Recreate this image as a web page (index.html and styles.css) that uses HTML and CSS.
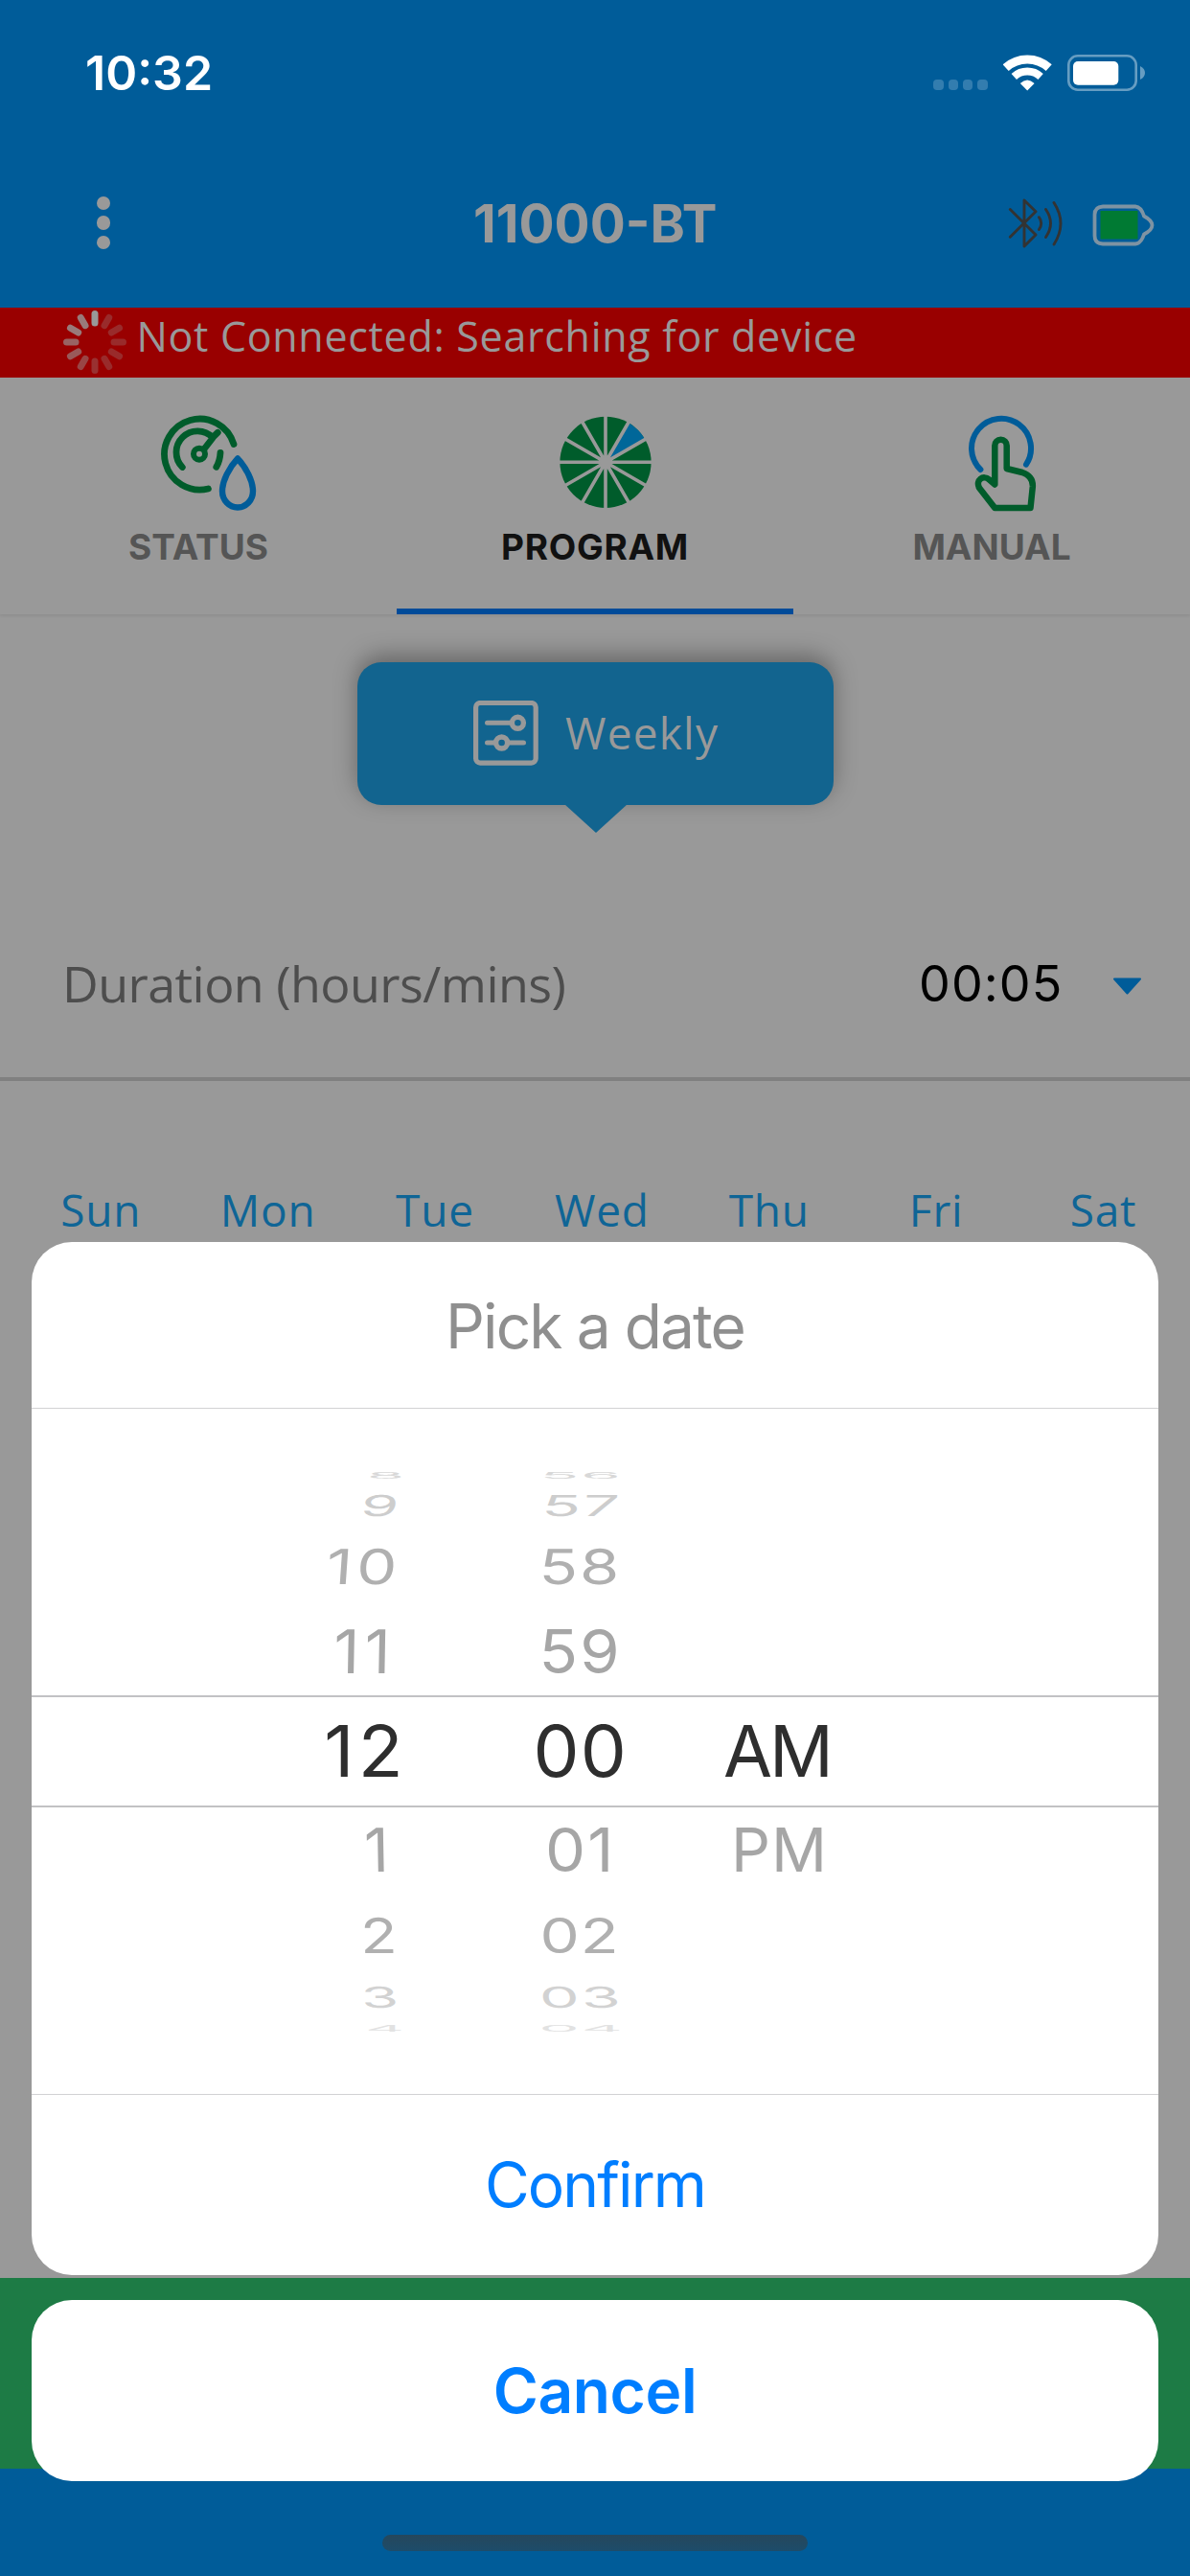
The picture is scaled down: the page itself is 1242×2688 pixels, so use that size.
FILE: index.html
```html
<!DOCTYPE html>
<html lang="en">
<head>
<meta charset="utf-8">
<title>11000-BT</title>
<link rel="stylesheet" href="styles.css">
</head>
<body>
<div class="screen">
  <div class="app">
    <header class="header">
      <div class="statusbar">
        <span class="clock">10:32</span>
        <span class="status-icons">
          <span class="cell-dots"><i></i><i></i><i></i><i></i></span>
          <svg class="wifi" width="51" height="38" viewBox="1046.5 56.5 51 38" fill="none" stroke="#fff">
            <path d="M1049.2 70.2A33.5 33.5 0 0 1 1094.2 70.2" stroke-width="9"/>
            <path d="M1057.8 79.5A20.6 20.6 0 0 1 1085.6 79.5" stroke-width="8"/>
            <path d="M1071.7 94L1064.3 86.6Q1071.7 79.5 1079.1 86.6Z" fill="#fff" stroke="none"/>
          </svg>
          <svg class="phone-battery" width="82" height="38" viewBox="1114 57 82 38">
            <rect x="1115.3" y="58.3" width="70.4" height="35.4" rx="9.5" fill="none" stroke="#669dc2" stroke-width="2.6"/>
            <rect x="1120" y="64" width="47.3" height="24.8" rx="5" fill="#fff"/>
            <path d="M1190 69Q1195 71.5 1195 76T1190 83Z" fill="#669dc2"/>
          </svg>
        </span>
      </div>
      <div class="navbar">
        <span class="menu"><i></i><i></i><i></i></span>
        <h1 class="title">11000-BT</h1>
        <span class="nav-icons">
          <svg width="58" height="54" viewBox="1052 206 58 54" fill="none" stroke="#333" stroke-width="2.9" stroke-linecap="round" stroke-linejoin="round">
            <path d="M1054.3 218.5L1081 245L1069 257V209L1081 220.7L1054.3 247.3"/>
            <path d="M1084.4 226.7Q1089 233 1084.4 239.5M1091.5 218.5Q1101.5 233 1091.5 247.5M1100 211.5Q1114 233 1100 255"/>
          </svg>
          <svg width="65" height="44" viewBox="1140 213 65 44">
            <path d="M1151 215.5H1185Q1191 216 1194 225.500Q1202.500 230 1202.500 235T1194 244.500Q1191 254 1185 254.500H1151Q1142.500 254 1142.500 246V224Q1142.500 216 1151 215.500Z" fill="none" stroke="#7e93a3" stroke-width="3.800"/>
            <rect x="1148.500" y="220" width="39" height="29.500" fill="#007a33"/>
          </svg>
        </span>
      </div>
    </header>

    <div class="alert">
      <svg class="spinner" width="68" height="68" viewBox="-34 -34 68 68" stroke="#999" stroke-width="7" stroke-linecap="round">
        <path d="M0-29.500V-20"/>
        <path d="M0-29.500V-20" transform="rotate(330)" opacity=".8"/>
        <path d="M0-29.500V-20" transform="rotate(300)" opacity=".8"/>
        <path d="M0-29.500V-20" transform="rotate(270)" opacity=".65"/>
        <path d="M0-29.500V-20" transform="rotate(240)" opacity=".58"/>
        <path d="M0-29.500V-20" transform="rotate(210)" opacity=".45"/>
        <path d="M0-29.500V-20" transform="rotate(180)" opacity=".32"/>
        <path d="M0-29.500V-20" transform="rotate(150)" opacity=".28"/>
        <path d="M0-29.500V-20" transform="rotate(120)" opacity=".28"/>
        <path d="M0-29.500V-20" transform="rotate(90)" opacity=".28"/>
        <path d="M0-29.500V-20" transform="rotate(60)" opacity=".28"/>
        <path d="M0-29.500V-20" transform="rotate(30)" opacity=".28"/>
      </svg>
      <span class="alert-text">Not Connected: Searching for device</span>
    </div>

    <nav class="tabs">
      <div class="tab">
        <svg class="tab-icon status-icon" width="100" height="101" viewBox="168 433 100 101" fill="none" stroke="#005c2b" stroke-width="6.800" stroke-linecap="round" stroke-linejoin="round">
          <path d="M244 463.500A37 37 0 1 0 217.400 510"/>
          <path d="M190.300 487.500A21.500 21.500 0 0 1 222 456.500L227.300 451.300M222 457L213.500 468"/>
          <path d="M230 472.500Q229.500 481 225.800 487.300"/>
          <circle cx="208" cy="473.700" r="6" stroke-width="6"/>
          <path d="M248 478.500C239 488 232 502 232 512.500A16 17 0 0 0 264 512.500C264 502 257 488 248 478.500Z" stroke="#005c99" stroke-width="6.400"/>
        </svg>
        <span class="tab-label">STATUS</span>
      </div>
      <div class="tab tab-active">
        <svg class="tab-icon program-icon" width="96" height="101" viewBox="583.500 433 96 101">
          <circle cx="631.500" cy="482.300" r="47.600" fill="#005c2b"/>
          <path d="M631.500 482.300L655.300 441.100A47.600 47.600 0 0 1 672.700 458.500Z" fill="#006799"/>
          <path d="M631.500 433V532M582 482.300H681M606.800 439.500L656.200 525.100M656.200 439.500L606.800 525.100M588.700 457.600L674.300 507M588.700 507L674.300 457.600" stroke="#999" stroke-width="3.600"/>
          <circle cx="631.500" cy="482.300" r="5.500" fill="#999"/>
        </svg>
        <span class="tab-label">PROGRAM</span>
      </div>
      <div class="tab">
        <svg class="tab-icon manual-icon" width="74" height="101" viewBox="1009 433 74 101" fill="none" stroke="#005c2b" stroke-width="6.500" stroke-linecap="round" stroke-linejoin="round">
          <path d="M1023.400 490A31 31 0 1 1 1071 484.700" stroke="#005c99" stroke-width="6"/>
          <path d="M1038.300 505.500V465A6.200 6.200 0 0 1 1050.700 465V489L1067 493Q1078.500 497 1077.800 508L1075.500 530H1038.300L1022 509C1018 501 1026 495 1032.500 500.500Z"/>
        </svg>
        <span class="tab-label">MANUAL</span>
      </div>
    </nav>

    <main class="content">
      <div class="mode-button">
        <svg width="68" height="68" viewBox="494 732 68 68" fill="none" stroke="#999" stroke-linecap="round">
          <rect x="496.600" y="734.500" width="62.600" height="62.600" rx="4.500" stroke-width="5.200"/>
          <path d="M508.500 755.300H534M508.500 776H546.500" stroke-width="5"/>
          <circle cx="540.400" cy="755.300" r="6" fill="#12648f" stroke-width="5.400"/>
          <circle cx="523.600" cy="776" r="6" fill="#12648f" stroke-width="5.400"/>
        </svg>
        <span class="mode-label">Weekly</span>
      </div>
      <div class="duration">
        <span class="duration-label">Duration (hours/mins)</span>
        <span class="duration-value">00:05</span>
        <svg class="caret" width="31" height="18" viewBox="0 0 31 18"><path d="M2 1.500H29L15.500 16.500Z" fill="#005c99" stroke="#005c99" stroke-width="2" stroke-linejoin="round"/></svg>
      </div>
      <div class="days">
        <span>Sun</span><span>Mon</span><span>Tue</span><span>Wed</span><span>Thu</span><span>Fri</span><span>Sat</span>
      </div>
    </main>
    <div class="action-bar"></div>
    <footer class="bottom-bar"></footer>
  </div>

  <div class="modal">
    <section class="sheet">
      <h2 class="sheet-title">Pick a date</h2>
      <div class="picker">
        <div class="row far4 up"><span class="hour"><b>8</b></span><span class="minute"><b>56</b></span><span></span></div>
        <div class="row far3 up"><span class="hour"><b>9</b></span><span class="minute"><b>57</b></span><span></span></div>
        <div class="row far2 up"><span class="hour"><b>10</b></span><span class="minute"><b>58</b></span><span></span></div>
        <div class="row far1 up"><span class="hour"><b>11</b></span><span class="minute"><b>59</b></span><span></span></div>
        <div class="row selected"><span class="hour"><b>12</b></span><span class="minute"><b>00</b></span><span class="period"><b>AM</b></span></div>
        <div class="row far1 down"><span class="hour"><b>1</b></span><span class="minute"><b>01</b></span><span class="period"><b>PM</b></span></div>
        <div class="row far2 down"><span class="hour"><b>2</b></span><span class="minute"><b>02</b></span><span></span></div>
        <div class="row far3 down"><span class="hour"><b>3</b></span><span class="minute"><b>03</b></span><span></span></div>
        <div class="row far4 down"><span class="hour"><b>4</b></span><span class="minute"><b>04</b></span><span></span></div>
      </div>
      <div class="confirm">Confirm</div>
    </section>
    <div class="cancel">Cancel</div>
    <div class="home-indicator"></div>
  </div>
</div>
</body>
</html>
```
FILE: styles.css
```css
* { box-sizing: border-box; }
body { margin: 0; background: #999; font-family: Inter, "Liberation Sans", sans-serif; }
svg { display: block; flex: none; }
h1, h2 { margin: 0; }

.screen { position: relative; width: 1242px; height: 2688px; overflow: hidden; }
.app { display: flex; flex-direction: column; height: 2688px; background: #999; }

/* Header */
.header { height: 321px; background: #005c99; }
.statusbar { display: flex; justify-content: space-between; align-items: center; height: 142px; padding: 10px 46px 0 89px; }
.clock { font-size: 50px; font-weight: 600; line-height: 60px; color: #fff; }
.status-icons { display: flex; align-items: center; }
.cell-dots { display: flex; gap: 5px; margin: 25px 16.5px 0 0; }
.cell-dots i { width: 10.3px; height: 11px; border-radius: 4px; background: #337daf; }
.phone-battery { margin-left: 16px; }

.navbar { display: grid; grid-template-columns: 1fr auto 1fr; align-items: center; height: 179px; padding: 2px 37px 0 100.5px; }
.menu { display: flex; flex-direction: column; gap: 6.3px; }
.menu i { width: 14.4px; height: 14.4px; border-radius: 50%; background: #999; }
.title { font-size: 55px; font-weight: 700; line-height: 66px; color: #999; transform: translateX(-31.5px); }
.nav-icons { display: flex; align-items: center; justify-content: flex-end; gap: 30px; }
.nav-icons svg:last-child { margin-top: 4px; }

.alert { display: flex; align-items: center; height: 72.5px; padding-left: 65.4px; background: #900; }
.alert-text { margin-left: 9px; padding-bottom: 13px; font-family: "Open Sans", sans-serif; font-size: 43px; line-height: 54px; letter-spacing: .7px; color: #999; white-space: nowrap; }

/* Tabs */
.tabs { display: grid; grid-template-columns: repeat(3, 1fr); height: 247.5px; box-shadow: 0 2px 3px rgba(0,0,0,.07); }
.tab { display: flex; flex-direction: column; align-items: center; padding-top: 39.5px; }
.tab-active { border-bottom: 6.5px solid #004b99; }
.status-icon { margin-left: 22px; }
.program-icon { margin-left: 21px; }
.manual-icon { margin-left: 22px; }
.tab-label { margin-top: 14px; font-size: 37px; font-weight: 700; line-height: 46px; color: #555; }
.tab-active .tab-label { color: #111; letter-spacing: .7px; }

/* Content */
.content { flex: 1; }
.mode-button { position: relative; display: flex; align-items: center; width: 497px; height: 148.5px; margin: 50px 0 0 373px; padding-left: 121px; border-radius: 25px; background: #12648f; box-shadow: 0 -7px 24px rgba(0,0,0,.34); }
.mode-button::after { content: ""; position: absolute; left: 215.6px; top: 148px; border: 33px solid transparent; border-top: 30px solid #12648f; border-bottom: 0; }
.mode-label { margin-left: 28px; padding-bottom: 2px; font-family: "Open Sans", sans-serif; font-size: 46px; line-height: 56px; letter-spacing: 1.2px; color: #999; }
.duration { display: flex; align-items: center; height: 207.5px; margin-top: 80.5px; padding: 11px 50.5px 0 65px; border-bottom: 4px solid #808080; }
.duration-label { flex: 1; padding-bottom: 3px; font-family: "Open Sans", sans-serif; font-size: 52px; line-height: 60px; letter-spacing: -.55px; color: #4d4d4d; }
.duration-value { margin-right: 51px; font-size: 52px; line-height: 60px; letter-spacing: 1.1px; color: #000; }
.caret { margin-top: 3px; }
.days { display: grid; grid-template-columns: repeat(7, 174.4px); margin: 104px 0 0 18px; font-family: "Open Sans", sans-serif; font-size: 46px; line-height: 60px; letter-spacing: .8px; text-align: center; color: #0f6596; }
.action-bar { height: 199px; background: #1d7b45; }
.bottom-bar { height: 112px; background: #005c99; }

/* Date sheet over the page */
.modal { position: absolute; left: 33px; right: 33px; top: 1296px; bottom: 0; display: flex; flex-direction: column; }
.sheet { height: 1077.5px; border-radius: 42px; background: #fff; }
.sheet-title { height: 173px; line-height: 175px; font-size: 64px; font-weight: 400; letter-spacing: -1.9px; text-align: center; color: #8f8f8f; }
.picker { height: 716.5px; padding-top: 55.5px; border: solid #d2d2d4; border-width: 1.5px 0; }
.row { display: grid; grid-template-columns: 393px 284px 202px; align-items: center; font-size: 63px; line-height: 1; }
.row b { display: inline-block; font-weight: 400; }
.hour { text-align: right; }
.minute { padding-left: 74px; text-align: center; }
.period { text-align: center; }

.selected { height: 117px; margin: 2px 0 0; border: solid #c2c2c4; border-width: 2px 0; font-size: 74px; color: #2e2e2e; }
.selected .hour b { margin-right: 3px; letter-spacing: 4px; transform: scaleX(1.04); }
.selected .minute b { margin-right: -1px; letter-spacing: 1px; transform: scaleX(1.03); }
.selected .period b { letter-spacing: -3px; }

.far1 { height: 86px; color: #a6a6a6; }
.far1.down { height: 90px; }
.far1 .hour b { margin-right: 15px; letter-spacing: 5px; transform: scaleX(1.05) skewX(-1deg); }
.far1.down .hour b { transform: skewX(1deg); }
.far1 .minute b { margin-right: -2px; letter-spacing: 2px; transform: scaleX(1.06); }
.far1 .period b { margin-right: -6px; letter-spacing: 1px; transform: scaleX(1.02); }

.far2 { height: 92px; color: #b0b0b0; }
.far2.down { height: 88px; }
.far2 .hour b { margin-right: 10px; letter-spacing: 4px; transform: scale(1.06, .8) skewX(-3deg); }
.far2.down .hour b { margin-right: 8px; transform: scale(1, .8) skewX(1deg); }
.far2 .minute b { margin-right: -2px; letter-spacing: 2px; transform: scale(1.06, .8) skewX(-1deg); }
.far2.down .minute b { margin-right: 0; letter-spacing: 1px; transform: scale(1.04, .8); }

.far3 { height: 36px; line-height: 36px; color: #cdcdcd; }
.far3.down { height: 41px; line-height: 41px; color: #d2d2d2; }
.far3 .hour b { margin-right: 10px; transform: scaleY(.48) skewX(-5deg); }
.far3 .minute b { margin-right: -3px; letter-spacing: 2px; transform: scale(1.06, .48) skewX(-3deg); }
.far3.down .hour b { transform: scaleY(.48) skewX(2deg); }
.far3.down .minute b { transform: scale(1.05, .48) skewX(2deg); }

.far4 { height: 27px; line-height: 27px; color: #d8d8d8; }
.far4.down { height: 23px; line-height: 23px; color: #e2e2e2; }
.far4 .hour b { margin-right: 4px; transform: scaleY(.14); }
.far4 .minute b { margin-right: -4px; letter-spacing: 2px; transform: scale(1.06, .14); }

.confirm { height: 188px; line-height: 188px; font-size: 64px; letter-spacing: -1.9px; text-align: center; color: #007eff; }
.cancel { height: 189px; margin-top: 26.5px; border-radius: 42px; background: #fff; line-height: 189px; font-size: 64px; font-weight: 600; letter-spacing: -.4px; text-align: center; color: #007eff; }
.home-indicator { width: 444px; height: 16.5px; margin: 56px auto 0; border-radius: 9px; background: linear-gradient(#25475c, #1d4c6a); }
```
